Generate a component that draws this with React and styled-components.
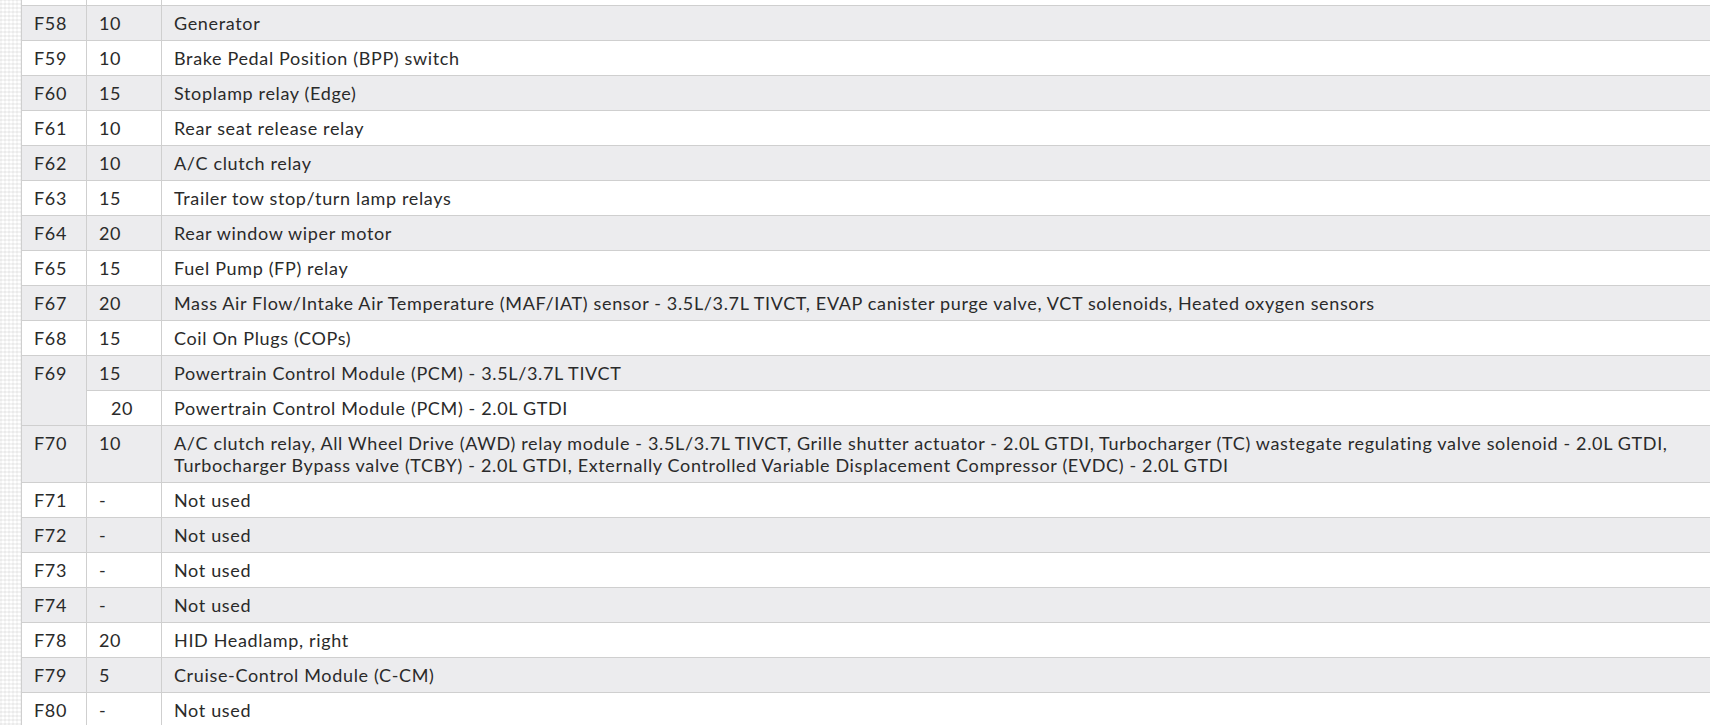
import React from 'react'
import styled, { createGlobalStyle } from 'styled-components'

const GlobalStyle = createGlobalStyle`
  html, body {
    margin: 0;
    padding: 0;
    overflow: hidden;
  }
  body {
    background-color: #ffffff;
    background-image: repeating-linear-gradient(
        0deg,
        #f3f3f3 0px,
        #f3f3f3 2px,
        #ffffff 2px,
        #ffffff 4px
      ),
      repeating-linear-gradient(90deg, #f6f6f6 0px, #f6f6f6 2px, #ffffff 2px, #ffffff 4px);
    background-blend-mode: multiply;
    font-family: Lato, 'Open Sans', sans-serif;
  }
`

const Page = styled.div`
  height: 725px;
  overflow: hidden;
  padding-left: 21px;
`

const FuseTable = styled.table`
  width: 1720px;
  margin-top: -30px;
  border-collapse: collapse;
  background: #ffffff;
  color: #2a2a2a;
  font-size: 18px;
  line-height: 22px;
  letter-spacing: 0.65px;
  table-layout: fixed;
`

const Row = styled.tr`
  background: ${(p) => (p.$shade ? '#ececee' : '#ffffff')};
`

const Cell = styled.td`
  border: 1px solid #cfcfcf;
  padding: 6px 8px 6px ${(p) => (p.$indent ? '24px' : '12px')};
  vertical-align: top;
  white-space: pre-line;
`

const fuses = [
  ['', '', ''],
  ['F58', '10', 'Generator'],
  ['F59', '10', 'Brake Pedal Position (BPP) switch'],
  ['F60', '15', 'Stoplamp relay (Edge)'],
  ['F61', '10', 'Rear seat release relay'],
  ['F62', '10', 'A/C clutch relay'],
  ['F63', '15', 'Trailer tow stop/turn lamp relays'],
  ['F64', '20', 'Rear window wiper motor'],
  ['F65', '15', 'Fuel Pump (FP) relay'],
  [
    'F67',
    '20',
    'Mass Air Flow/Intake Air Temperature (MAF/IAT) sensor - 3.5L/3.7L TIVCT, EVAP canister purge valve, VCT solenoids, Heated oxygen sensors',
  ],
  ['F68', '15', 'Coil On Plugs (COPs)'],
]

const after = [
  [
    'F70',
    '10',
    'A/C clutch relay, All Wheel Drive (AWD) relay module - 3.5L/3.7L TIVCT, Grille shutter actuator - 2.0L GTDI, Turbocharger (TC) wastegate regulating valve solenoid - 2.0L GTDI,\nTurbocharger Bypass valve (TCBY) - 2.0L GTDI, Externally Controlled Variable Displacement Compressor (EVDC) - 2.0L GTDI',
  ],
  ['F71', '-', 'Not used'],
  ['F72', '-', 'Not used'],
  ['F73', '-', 'Not used'],
  ['F74', '-', 'Not used'],
  ['F78', '20', 'HID Headlamp, right'],
  ['F79', '5', 'Cruise-Control Module (C-CM)'],
  ['F80', '-', 'Not used'],
]

export default function App() {
  // the F69 row is split in two, so the stripes count rows not fuses
  let idx = 0
  const shade = () => idx++ % 2 === 1

  return (
    <>
      <GlobalStyle />
      <Page>
        <FuseTable>
          <colgroup>
            <col style={{ width: 65 }} />
            <col style={{ width: 75 }} />
            <col />
          </colgroup>
          <tbody>
            {fuses.map(([fuse, amp, desc]) => (
              <Row key={fuse || 'top'} $shade={shade()}>
                <Cell>{fuse}</Cell>
                <Cell>{amp}</Cell>
                <Cell>{desc || '\u00a0'}</Cell>
              </Row>
            ))}
            <Row $shade={shade()}>
              <Cell rowSpan={2}>F69</Cell>
              <Cell>15</Cell>
              <Cell>Powertrain Control Module (PCM) - 3.5L/3.7L TIVCT</Cell>
            </Row>
            <Row $shade={shade()}>
              <Cell $indent>20</Cell>
              <Cell>Powertrain Control Module (PCM) - 2.0L GTDI</Cell>
            </Row>
            {after.map(([fuse, amp, desc]) => (
              <Row key={fuse} $shade={shade()}>
                <Cell>{fuse}</Cell>
                <Cell>{amp}</Cell>
                <Cell>{desc}</Cell>
              </Row>
            ))}
          </tbody>
        </FuseTable>
      </Page>
    </>
  )
}
